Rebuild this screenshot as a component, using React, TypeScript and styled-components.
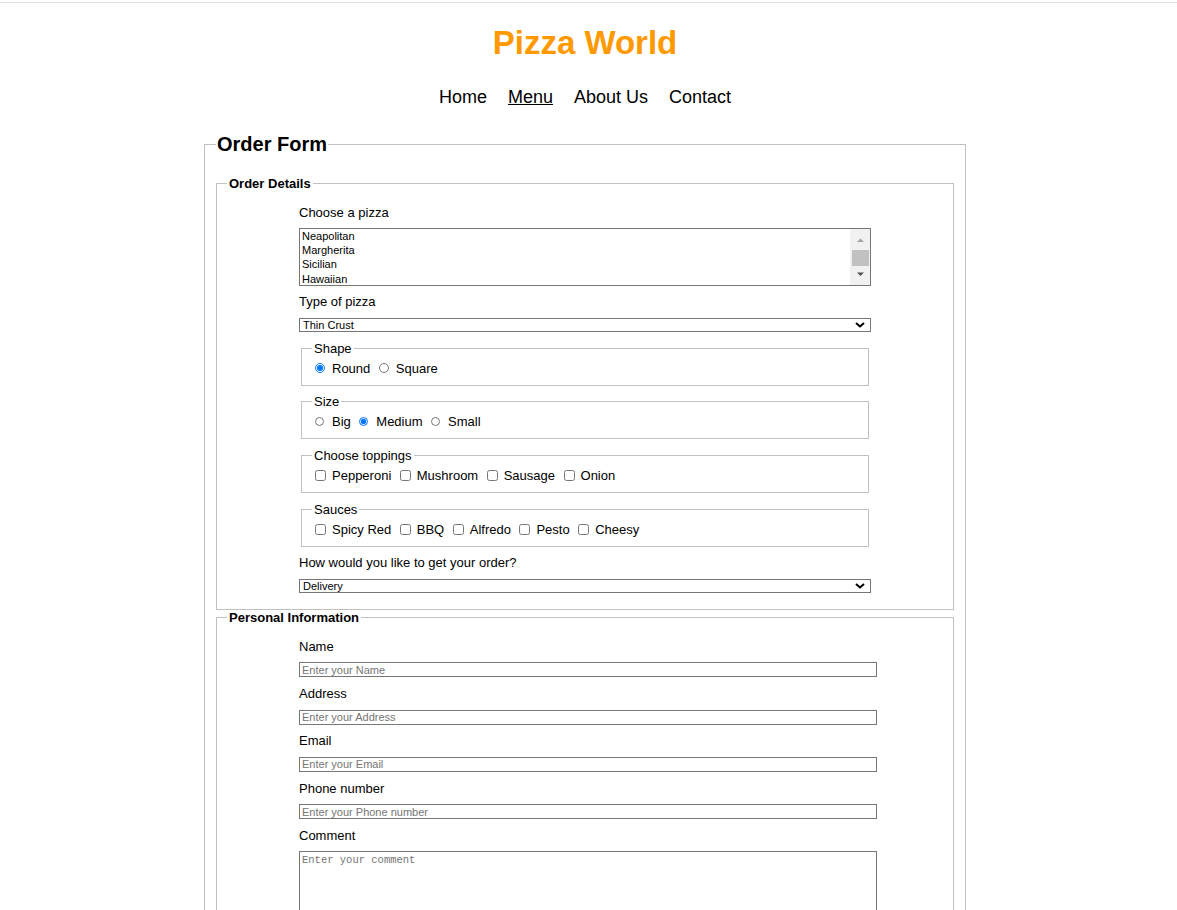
import styled, { createGlobalStyle } from "styled-components"

const GlobalStyle = createGlobalStyle`
  html {
    overflow: hidden;
  }
  body {
    margin: 0;
    background: #fff;
    color: #000;
    font-family: "Liberation Sans", Arial, sans-serif;
  }
`

const pizzas = ["Neapolitan", "Margherita", "Sicilian", "Hawaiian", "New York", "Chicago", "Detroit"]

const personalFields = [
  { id: "name", label: "Name", placeholder: "Enter your Name" },
  { id: "address", label: "Address", placeholder: "Enter your Address" },
  { id: "email", label: "Email", placeholder: "Enter your Email" },
  { id: "phone", label: "Phone number", placeholder: "Enter your Phone number" },
]

function Dropdown(props: { value: string; options: { value: string; label: string }[] }) {
  return (
    <SelectWrap>
      <Select defaultValue={props.value}>
        {props.options.map(o => <option key={o.value} value={o.value}>{o.label}</option>)}
      </Select>
      <Chevron width="10" height="6" viewBox="0 0 10 6">
        <path d="M1 1 L5 4.5 L9 1" fill="none" stroke="#000" strokeWidth="2" />
      </Chevron>
    </SelectWrap>
  )
}

export default function App() {
  return (
    <>
      <GlobalStyle />
      <TopRule />
      <Page>
        <Header>
          <Title>Pizza World</Title>
          <Nav>
            <NavLink href="#">Home</NavLink>
            <NavLink href="#" $active>Menu</NavLink>
            <NavLink href="#">About Us</NavLink>
            <NavLink href="#">Contact</NavLink>
          </Nav>
        </Header>

        <Main>
          <OrderForm>
            <FormLegend>Order Form</FormLegend>

            <Section>
              <SectionLegend>Order Details</SectionLegend>
              <Content>
                <Label>Choose a pizza</Label>
                <ListBox>
                  <Options>
                    {pizzas.map(p => <Option key={p}>{p}</Option>)}
                  </Options>
                  <ScrollTrack>
                    <svg width="20" height="56" viewBox="0 0 20 56">
                      <path d="M7 13 L10.5 9.5 L14 13 Z" fill="#a3a3a3" />
                      <rect x="2" y="21" width="17" height="16" fill="#c1c1c1" />
                      <path d="M7 43.5 L10.5 47 L14 43.5 Z" fill="#505050" />
                    </svg>
                  </ScrollTrack>
                </ListBox>

                <Label>Type of pizza</Label>
                <Dropdown
                  value="thin"
                  options={[
                    { value: "thin", label: "Thin Crust" },
                    { value: "thick", label: "Thick Crust" },
                    { value: "stuffed", label: "Stuffed Crust" },
                  ]}
                />

                <Group>
                  <GroupLegend>Shape</GroupLegend>
                  <Row>
                    <Choice><Tick type="radio" name="shape" $size={10} defaultChecked />Round</Choice>
                    <Choice><Tick type="radio" name="shape" $size={10} />Square</Choice>
                  </Row>
                </Group>

                <Group>
                  <GroupLegend>Size</GroupLegend>
                  <Row>
                    <Choice><Tick type="radio" name="size" $size={9} />Big</Choice>
                    <Choice><Tick type="radio" name="size" $size={9} defaultChecked />Medium</Choice>
                    <Choice><Tick type="radio" name="size" $size={9} />Small</Choice>
                  </Row>
                </Group>

                <Group>
                  <GroupLegend>Choose toppings</GroupLegend>
                  <Row>
                    {["Pepperoni", "Mushroom", "Sausage", "Onion"].map(t => (
                      <Choice key={t}><Tick type="checkbox" $size={11} />{t}</Choice>
                    ))}
                  </Row>
                </Group>

                <Group>
                  <GroupLegend>Sauces</GroupLegend>
                  <Row>
                    {["Spicy Red", "BBQ", "Alfredo", "Pesto", "Cheesy"].map(s => (
                      <Choice key={s}><Tick type="checkbox" $size={11} />{s}</Choice>
                    ))}
                  </Row>
                </Group>

                <Label>How would you like to get your order?</Label>
                <Dropdown
                  value="delivery"
                  options={[
                    { value: "delivery", label: "Delivery" },
                    { value: "pickup", label: "Pick up" },
                  ]}
                />
              </Content>
            </Section>

            <Section>
              <SectionLegend>Personal Information</SectionLegend>
              <Content>
                {personalFields.map(f => (
                  <div key={f.id}>
                    <Label htmlFor={f.id}>{f.label}</Label>
                    <TextInput id={f.id} placeholder={f.placeholder} />
                  </div>
                ))}
                <Label htmlFor="comment">Comment</Label>
                <Comment id="comment" placeholder="Enter your comment" />
              </Content>
            </Section>
          </OrderForm>
        </Main>
      </Page>
    </>
  )
}

const TopRule = styled.div`
  margin-top: 2px;
  height: 1px;
  background: #e0e0e0;
`

const Page = styled.div`
  padding-right: 7px;
`

const Header = styled.header`
  text-align: center;
`

const Title = styled.h1`
  margin: 21px 0 0;
  font-size: 33px;
  line-height: 38px;
  font-weight: 700;
  color: #ff9900;
`

const Nav = styled.nav`
  display: flex;
  justify-content: center;
  gap: 21px;
  margin-top: 25px;
  font-size: 18px;
  line-height: 21px;
`

const NavLink = styled.a<{ $active?: boolean }>`
  color: #000;
  text-decoration: ${p => (p.$active ? "underline" : "none")};
`

const Main = styled.main`
  width: 762px;
  margin: 24.5px auto 0;
`

const OrderForm = styled.fieldset`
  min-width: 0;
  margin: 0;
  padding: 20.5px 11px 0;
  border: 1px solid #c0c0c0;
`

const FormLegend = styled.legend`
  padding: 0 1px;
  font-size: 20px;
  line-height: 23px;
  font-weight: 700;
`

const Section = styled.fieldset`
  min-width: 0;
  margin: 0;
  padding: 13.5px 10px 7.5px;
  border: 1px solid #c0c0c0;
`

const SectionLegend = styled.legend`
  padding: 0 2px;
  font-size: 13px;
  line-height: 15px;
  font-weight: 700;
`

const Content = styled.div`
  margin: 0 72px;
`

const Label = styled.label`
  display: block;
  margin-bottom: 8.5px;
  font-size: 13px;
  line-height: 15px;
`

const ListBox = styled.div`
  display: grid;
  grid-template-columns: 1fr 20px;
  height: 58px;
  margin-bottom: 8px;
  box-sizing: border-box;
  border: 1px solid #767676;
  overflow: hidden;
`

const Options = styled.div`
  padding: 0 2px;
  font-size: 11px;
  line-height: 14.2px;
`

const Option = styled.div`
  white-space: nowrap;
`

const ScrollTrack = styled.div`
  background: #f1f1f1;
  svg {
    display: block;
  }
`

const SelectWrap = styled.div`
  position: relative;
  margin-bottom: 9px;
`

const Select = styled.select`
  display: block;
  width: 100%;
  height: 14px;
  margin: 0;
  padding: 0 20px 0 3px;
  box-sizing: border-box;
  appearance: none;
  border: 1px solid #767676;
  border-radius: 0;
  background: #fff;
  color: #000;
  font-family: "Liberation Sans", Arial, sans-serif;
  font-size: 11px;
  line-height: 12px;
`

const Chevron = styled.svg`
  position: absolute;
  right: 6px;
  top: 4px;
  pointer-events: none;
`

const Group = styled.fieldset`
  min-width: 0;
  margin: 0 2px 8.7px;
  padding: 5px 10px 9px;
  border: 1px solid #c0c0c0;
`

const GroupLegend = styled.legend`
  padding: 0 2px;
  font-size: 13px;
  line-height: 15px;
`

const Row = styled.div`
  display: flex;
  align-items: center;
  gap: 8.5px;
  padding-left: 3px;
  font-size: 13px;
  line-height: 15px;
`

const Choice = styled.label`
  display: inline-flex;
  align-items: center;
`

const Tick = styled.input<{ $size: number }>`
  width: ${p => p.$size}px;
  height: ${p => p.$size}px;
  margin: 0 ${p => 17 - p.$size}px 0 0;
`

const TextInput = styled.input`
  display: block;
  width: 578px;
  height: 15px;
  margin: 0 0 8.75px;
  padding: 0 2px;
  box-sizing: border-box;
  border: 1px solid #767676;
  border-radius: 0;
  font-family: "Liberation Sans", Arial, sans-serif;
  font-size: 11px;
  line-height: 13px;
  &::placeholder {
    color: #757575;
  }
`

const Comment = styled.textarea`
  display: block;
  width: 578px;
  height: 90px;
  margin: 0;
  padding: 2px;
  box-sizing: border-box;
  border: 1px solid #767676;
  border-radius: 0;
  resize: none;
  font-family: "Liberation Mono", "DejaVu Sans Mono", monospace;
  font-size: 10.5px;
  &::placeholder {
    color: #757575;
  }
`
